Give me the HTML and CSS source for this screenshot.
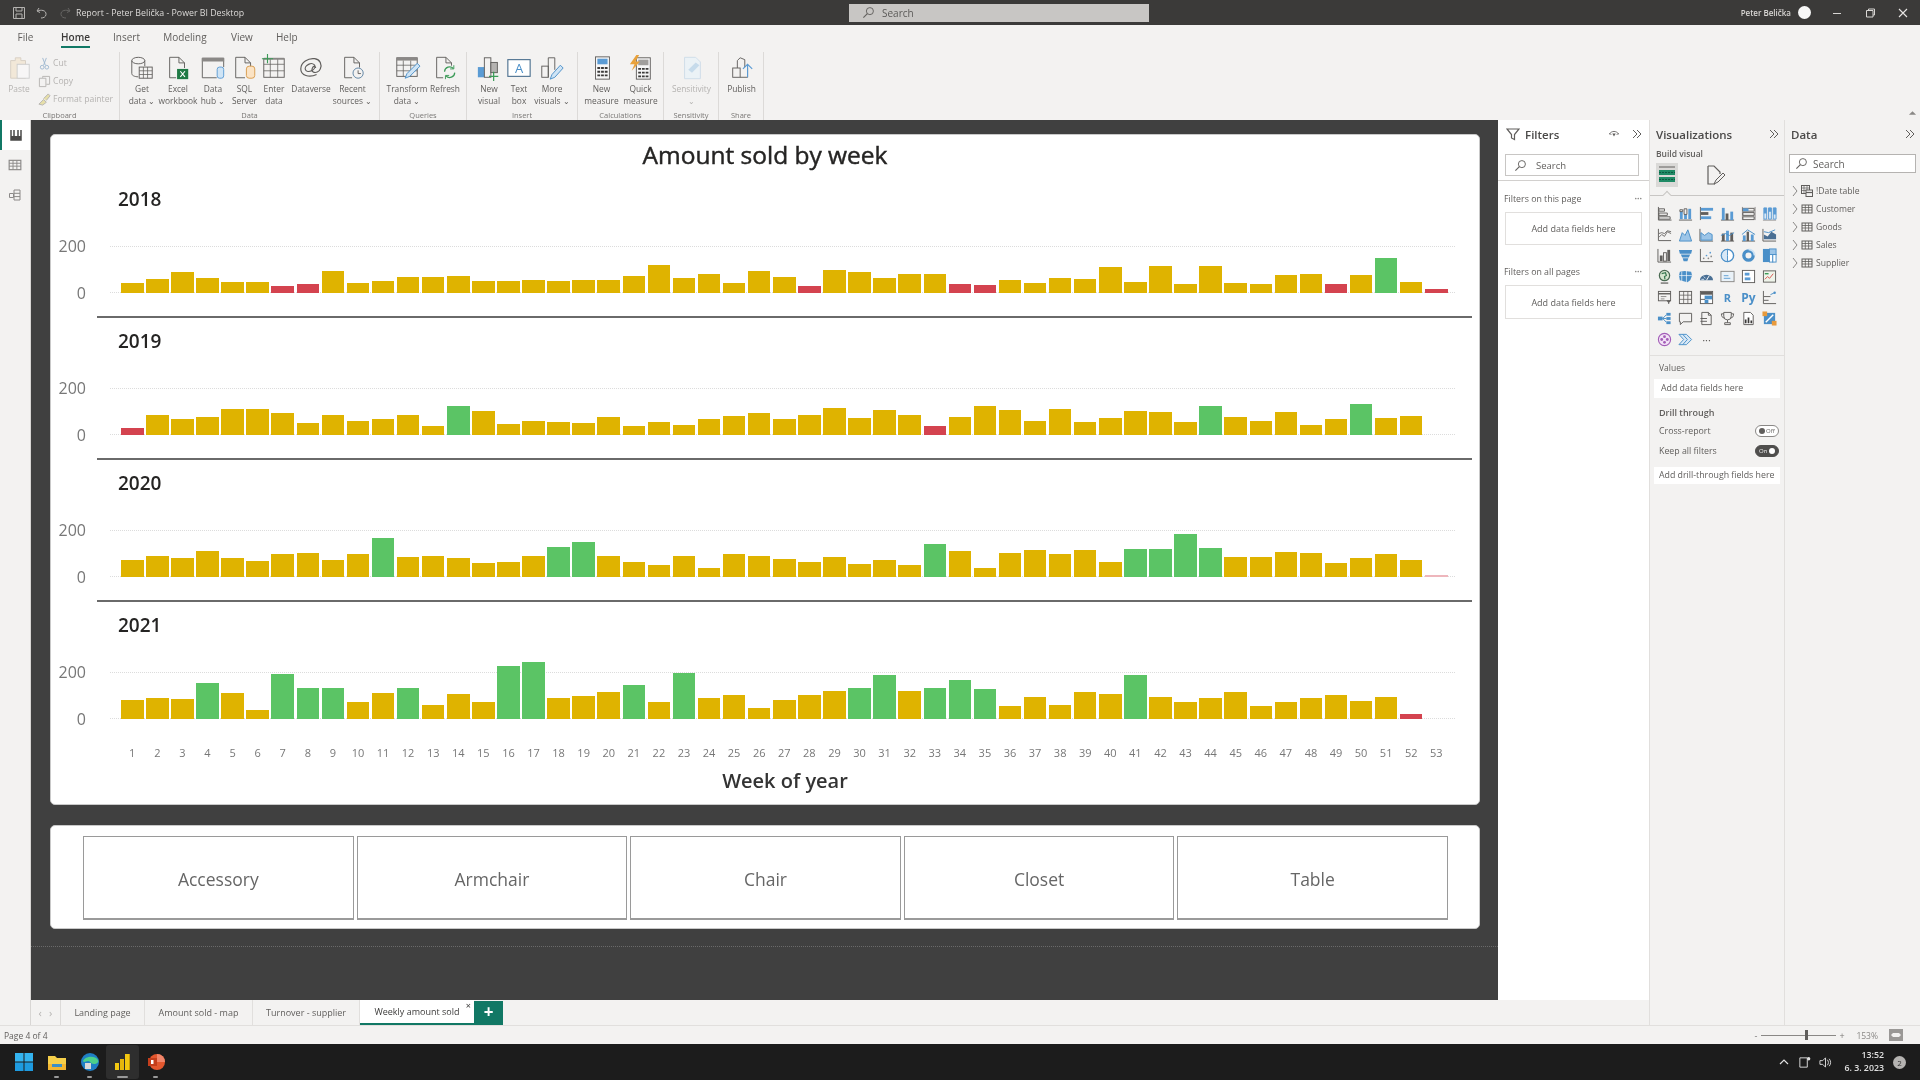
FILE: index.html
```html
<!DOCTYPE html>
<html lang="en">
<head>
<meta charset="utf-8">
<title>Report - Peter Belička - Power BI Desktop</title>
<link rel="stylesheet" href="styles.css">
</head>
<body>
<svg class="defs" width="0" height="0">
  <symbol id="tbl" viewBox="0 0 12 12"><rect x="1" y="2" width="10" height="8" fill="none" stroke="#605e5c"/><path d="M1 4.5h10M1 7h10M4.3 2v8M7.6 2v8" stroke="#605e5c" stroke-width=".8"/></symbol>
  <symbol id="dbl" viewBox="0 0 12 12"><path d="M3 2l4 4-4 4M7 2l4 4-4 4" fill="none" stroke="#605e5c" stroke-width="1"/></symbol>
  <symbol id="chev" viewBox="0 0 8 12"><path d="M2 1l4 5-4 5" fill="none" stroke="#8a8886" stroke-width="1"/></symbol>
  <symbol id="mag" viewBox="0 0 14 14"><circle cx="8.5" cy="5.5" r="3.8" fill="none" stroke="currentColor"/><path d="M5.8 8.2L1.5 12.5" stroke="currentColor" stroke-width="1.2"/></symbol>
</svg>
<div class="app">
  <header class="titlebar">
    <div class="tb-left">
      <svg class="tb-ico" viewBox="0 0 14 14"><path d="M1.5 1.5h11v11h-11zM4 1.5v3.5h6V1.5M4 12.5V8h6v4.5" fill="none" stroke="#b5b3b1"/></svg>
      <svg class="tb-ico" viewBox="0 0 14 14"><path d="M4 2L2 5l3 1.5M2.5 5c3-1.5 9-1 8.5 3.5-.3 2.5-2.500 3.500-5 3.500" fill="none" stroke="#b5b3b1"/></svg>
      <svg class="tb-ico dim" viewBox="0 0 14 14"><path d="M10 2l2 3-3 1.5M11.5 5c-3-1.5-9-1-8.5 3.5.3 2.500 2.500 3.500 5 3.500" fill="none" stroke="#b5b3b1"/></svg>
      <span class="tb-title">Report - Peter Belička - Power BI Desktop</span>
    </div>
    <div class="tb-search"><svg class="mag-ico" viewBox="0 0 14 14"><use href="#mag"/></svg><span>Search</span></div>
    <div class="tb-right">
      <span class="tb-user">Peter Belička</span><i class="avatar"></i>
      <svg class="win-ctl" viewBox="0 0 12 12"><path d="M2 6.5h8" stroke="#d8d6d4"/></svg>
      <svg class="win-ctl" viewBox="0 0 12 12"><path d="M2.5 3.5h6.5v6.5h-6.5zM4.5 3.5V2h6v6H9" fill="none" stroke="#d8d6d4"/></svg>
      <svg class="win-ctl" viewBox="0 0 12 12"><path d="M2 2l8 8M10 2l-8 8" stroke="#e8e6e4" stroke-width="1.1"/></svg>
    </div>
  </header>

  <section class="ribbon">
    <nav class="rtabs">
      <span class="rtab t-file">File</span>
      <span class="rtab t-home on">Home</span>
      <span class="rtab t-insert">Insert</span>
      <span class="rtab t-model">Modeling</span>
      <span class="rtab t-view">View</span>
      <span class="rtab t-help">Help</span>
    </nav>
    <div class="groups">
      <div class="group g-clip">
        <div class="gbody">
          <div class="rbtn w38 off">
            <svg class="ric" viewBox="0 0 28 28"><path d="M5 6h5V3h6v3h5v19H5z" fill="#f2e6d3" stroke="#cfc6b8"/><rect x="12" y="10" width="13" height="15" fill="#f8f8f8" stroke="#c4c4c4"/></svg>
            <span>Paste</span>
          </div>
          <div class="smalls">
            <div class="small off"><svg viewBox="0 0 14 14"><path d="M5 1l3 8M9 1L6 9" stroke="#9fb8cf" fill="none"/><circle cx="4.5" cy="11" r="2" fill="none" stroke="#9fb8cf"/><circle cx="9.5" cy="11" r="2" fill="none" stroke="#9fb8cf"/></svg><span>Cut</span></div>
            <div class="small off"><svg viewBox="0 0 14 14"><path d="M1.500 3.500h7v9h-7zM5 3V1.500h7.500V10H9" fill="none" stroke="#b5b3b1"/></svg><span>Copy</span></div>
            <div class="small off"><svg viewBox="0 0 14 14"><path d="M1 12l5-5 3 3-4 3zM6 6l5-5 2 2-4 5" fill="#e6dfa9" stroke="#b5b3b1"/></svg><span>Format painter</span></div>
          </div>
        </div>
        <div class="glabel">Clipboard</div>
      </div>

      <div class="group g-data">
        <div class="gbody">
          <div class="rbtn w36"><svg class="ric" viewBox="0 0 28 28"><ellipse cx="10" cy="6" rx="7" ry="3.5" fill="none" stroke="#605e5c"/><path d="M3 6v14c0 2 3 3.5 7 3.5M17 6v6" fill="none" stroke="#605e5c"/><rect x="11" y="13" width="14" height="12" fill="#f3f2f1" stroke="#605e5c"/><path d="M11 17h14M11 21h14M15.500 13v12M20 13v12" stroke="#605e5c" stroke-width=".8"/></svg><span>Get<br>data ⌄</span></div>
          <div class="rbtn w36"><svg class="ric" viewBox="0 0 28 28"><path d="M12 24.500H5v-22h10l6 6V14M15 2.500v6h6" fill="none" stroke="#605e5c"/><rect x="13" y="15" width="12" height="11" fill="#1f7a45"/><path d="M16.500 17.500l5 6M21.500 17.500l-5 6" stroke="#fff" stroke-width="1.2"/></svg><span>Excel<br>workbook</span></div>
          <div class="rbtn w34"><svg class="ric" viewBox="0 0 28 28"><path d="M18 24.500H2.500v-21h23V13" fill="none" stroke="#605e5c"/><rect x="2" y="3" width="24" height="4" fill="#8a8886"/><rect x="18.500" y="13" width="7" height="12" rx="2.500" fill="#cfe4f5" stroke="#5a9bd4"/></svg><span>Data<br>hub ⌄</span></div>
          <div class="rbtn w29"><svg class="ric" viewBox="0 0 28 28"><path d="M14 24.500H4v-22h10l6 6v4M14 2.500v6h6" fill="none" stroke="#605e5c"/><rect x="15.500" y="12" width="9" height="13" rx="3" fill="#fbe3c4" stroke="#d89a4a"/></svg><span>SQL<br>Server</span></div>
          <div class="rbtn w30"><svg class="ric" viewBox="0 0 28 28"><rect x="3" y="4" width="22" height="20" fill="none" stroke="#605e5c"/><path d="M3 10h22M3 17h22M10 4v20M18 4v20" stroke="#605e5c" stroke-width=".8"/><rect x="3" y="3" width="22" height="2" fill="#8a8886"/><path d="M1 4h12M7 -1v10" stroke="#3b9b57" stroke-width="1.2"/></svg><span>Enter<br>data</span></div>
          <div class="rbtn w44"><svg class="ric" viewBox="0 0 28 28"><path d="M20 21C12 25 3 22 3 15 3 8 11 3 18 4c6 1 8 6 6 11-1 3-5 5-8 3-2-1-1-3 0-5 1-1 3-1 3 1" fill="none" stroke="#605e5c" stroke-width="1.3"/><ellipse cx="13" cy="13.500" rx="5.500" ry="3.800" transform="rotate(-25 13 13.500)" fill="none" stroke="#605e5c" stroke-width="1.3"/></svg><span>Dataverse</span></div>
          <div class="rbtn w39"><svg class="ric" viewBox="0 0 28 28"><path d="M13 24.500H5v-22h10l6 6v5M15 2.500v6h6" fill="none" stroke="#605e5c"/><circle cx="19.500" cy="19.500" r="5.500" fill="#f3f2f1" stroke="#5a7fa0"/><path d="M19.500 16.500V20h3" fill="none" stroke="#605e5c"/></svg><span>Recent<br>sources ⌄</span></div>
        </div>
        <div class="glabel">Data</div>
      </div>

      <div class="group g-query">
        <div class="gbody">
          <div class="rbtn w48"><svg class="ric" viewBox="0 0 28 28"><rect x="3" y="3" width="22" height="20" fill="none" stroke="#605e5c"/><rect x="3" y="3" width="22" height="3" fill="#8a8886"/><path d="M3 11h22M3 17h22M10 6v17M18 6v17" stroke="#605e5c" stroke-width=".8"/><path d="M12 25l2-5 11-11 3 3-11 11z" fill="#cfe4f5" stroke="#4a8fc8"/></svg><span>Transform<br>data ⌄</span></div>
          <div class="rbtn w28"><svg class="ric" viewBox="0 0 28 28"><path d="M12 24.500H5v-22h10l6 6v3M15 2.500v6h6" fill="none" stroke="#605e5c"/><path d="M13.500 18a5.500 5.500 0 0 1 9.500-3.500M24.500 19a5.500 5.500 0 0 1-9.500 3.500" fill="none" stroke="#3b9b57" stroke-width="1.3"/><path d="M23.500 11v4h-4M14.500 26v-4h4" fill="none" stroke="#3b9b57"/></svg><span>Refresh</span></div>
        </div>
        <div class="glabel">Queries</div>
      </div>

      <div class="group g-insert">
        <div class="gbody">
          <div class="rbtn w30"><svg class="ric" viewBox="0 0 28 28"><rect x="2" y="13" width="7" height="11" fill="#5a9bd4"/><rect x="9" y="3" width="7" height="21" fill="none" stroke="#605e5c"/><rect x="16" y="8" width="7" height="11" fill="#b5b3b1" stroke="#605e5c"/><path d="M19 18v10M14 23h10" stroke="#3b9b57" stroke-width="1.3"/></svg><span>New<br>visual</span></div>
          <div class="rbtn w30"><svg class="ric" viewBox="0 0 28 28"><rect x="2" y="5" width="24" height="18" fill="#fff" stroke="#4b6f8e" stroke-width="1.2"/><text x="14" y="19" text-anchor="middle" class="svg-a">A</text></svg><span>Text<br>box</span></div>
          <div class="rbtn w36"><svg class="ric" viewBox="0 0 28 28"><rect x="3" y="12" width="7" height="12" fill="none" stroke="#605e5c"/><path d="M10 24V3h7v13" fill="none" stroke="#605e5c"/><path d="M12 26l2-5 9-10 3 3-9 10z" fill="#cfe4f5" stroke="#4a8fc8"/></svg><span>More<br>visuals ⌄</span></div>
        </div>
        <div class="glabel">Insert</div>
      </div>

      <div class="group g-calc">
        <div class="gbody">
          <div class="rbtn w41"><svg class="ric" viewBox="0 0 28 28"><rect x="7" y="2" width="15" height="24" fill="#f7f7f7" stroke="#605e5c"/><rect x="9" y="4" width="11" height="6" fill="#5a9bd4"/><path d="M9 14h3M13 14h3M17 14h3M9 18h3M13 18h3M17 18h3M9 22h3M13 22h3M17 22h3" stroke="#3b3a39" stroke-width="2"/></svg><span>New<br>measure</span></div>
          <div class="rbtn w37"><svg class="ric" viewBox="0 0 28 28"><rect x="9" y="3" width="15" height="23" fill="#f7f7f7" stroke="#605e5c"/><rect x="11" y="5" width="11" height="6" fill="#a19f9d"/><path d="M11 15h3M15 15h3M19 15h3M11 19h3M15 19h3M19 19h3M11 23h3M15 23h3M19 23h3" stroke="#3b3a39" stroke-width="2"/><path d="M9 0L2 10h5l-3 7 9-10H8l4-7z" fill="#e9a23b"/></svg><span>Quick<br>measure</span></div>
        </div>
        <div class="glabel">Calculations</div>
      </div>

      <div class="group g-sens">
        <div class="gbody">
          <div class="rbtn w55 off"><svg class="ric" viewBox="0 0 28 28"><path d="M6 2.500h12l5 5v18H6z" fill="#eaf2f8" stroke="#c5d7e6"/><path d="M10 16l8-8 4 3-8 8z" fill="#bcd6ea"/></svg><span>Sensitivity<br>⌄</span></div>
        </div>
        <div class="glabel">Sensitivity</div>
      </div>

      <div class="group g-share">
        <div class="gbody">
          <div class="rbtn w45"><svg class="ric" viewBox="0 0 28 28"><rect x="4" y="14" width="8" height="10" fill="none" stroke="#605e5c"/><path d="M9 14V6l3-3 5 2v8M12 24h8V14" fill="none" stroke="#605e5c"/><path d="M20 24V10M15 15l5-5 5 5" fill="none" stroke="#5a9bd4" stroke-width="1.2"/></svg><span>Publish</span></div>
        </div>
        <div class="glabel">Share</div>
      </div>

      <svg class="collapse" viewBox="0 0 10 6"><path d="M1 5l4-4 4 4z" fill="#8a8886"/></svg>
    </div>
  </section>

  <main class="main">
    <aside class="leftnav">
      <div class="nav-btn on"><svg viewBox="0 0 14 14"><path d="M2 2v10h10V2M5 2v6M9 2v6" fill="none" stroke="#4a4948" stroke-width="1.5"/><rect x="2" y="8" width="10" height="4" fill="#4a4948"/></svg></div>
      <div class="nav-btn soft"><svg viewBox="0 0 14 14"><use href="#tbl"/></svg></div>
      <div class="nav-btn soft"><svg viewBox="0 0 14 14"><path d="M6 2h6v10H6zM6 5.300h6M6 8.600h6M1.500 5.500h4v4h-4z" fill="none" stroke="#605e5c"/></svg></div>
    </aside>

    <div class="center">
      <div class="canvas">
        <section class="card chart">
          <h1 class="chart-title">Amount sold by week</h1>
          <div class="small-mult">
            <div class="srow">
              <div class="year">2018</div>
              <div class="plotrow">
                <div class="yaxis"><span>200</span><span>0</span></div>
                <div class="plot">
<i class="y" style="height:10.3px"></i><i class="y" style="height:13.7px"></i><i class="y" style="height:21px"></i><i class="y" style="height:14.7px"></i><i class="y" style="height:10.7px"></i><i class="y" style="height:11px"></i><i class="r" style="height:6.7px"></i><i class="r" style="height:8.7px"></i><i class="y" style="height:22.3px"></i><i class="y" style="height:10.3px"></i><i class="y" style="height:12px"></i><i class="y" style="height:16px"></i><i class="y" style="height:15.7px"></i><i class="y" style="height:16.7px"></i><i class="y" style="height:12px"></i><i class="y" style="height:12px"></i><i class="y" style="height:13px"></i><i class="y" style="height:11.7px"></i><i class="y" style="height:13.3px"></i><i class="y" style="height:13.3px"></i><i class="y" style="height:17.3px"></i><i class="y" style="height:28.3px"></i><i class="y" style="height:14.7px"></i><i class="y" style="height:19px"></i><i class="y" style="height:10.3px"></i><i class="y" style="height:21.7px"></i><i class="y" style="height:16.3px"></i><i class="r" style="height:7.3px"></i><i class="y" style="height:23.3px"></i><i class="y" style="height:21px"></i><i class="y" style="height:15.3px"></i><i class="y" style="height:19.3px"></i><i class="y" style="height:19.3px"></i><i class="r" style="height:9px"></i><i class="r" style="height:7.7px"></i><i class="y" style="height:13.3px"></i><i class="y" style="height:10.3px"></i><i class="y" style="height:14.7px"></i><i class="y" style="height:13.7px"></i><i class="y" style="height:25.7px"></i><i class="y" style="height:10.7px"></i><i class="y" style="height:27px"></i><i class="y" style="height:9px"></i><i class="y" style="height:27px"></i><i class="y" style="height:10px"></i><i class="y" style="height:9px"></i><i class="y" style="height:17.7px"></i><i class="y" style="height:19.3px"></i><i class="r" style="height:9px"></i><i class="y" style="height:18px"></i><i class="g" style="height:35.3px"></i><i class="y" style="height:11px"></i><i class="r" style="height:4.3px"></i>
                </div>
              </div>
            </div>
            <div class="srow">
              <div class="year">2019</div>
              <div class="plotrow">
                <div class="yaxis"><span>200</span><span>0</span></div>
                <div class="plot">
<i class="r" style="height:7px"></i><i class="y" style="height:20px"></i><i class="y" style="height:16.3px"></i><i class="y" style="height:18px"></i><i class="y" style="height:26.3px"></i><i class="y" style="height:26px"></i><i class="y" style="height:22px"></i><i class="y" style="height:11.7px"></i><i class="y" style="height:20.3px"></i><i class="y" style="height:14.3px"></i><i class="y" style="height:15.7px"></i><i class="y" style="height:20.3px"></i><i class="y" style="height:9px"></i><i class="g" style="height:29.3px"></i><i class="y" style="height:23.7px"></i><i class="y" style="height:11.3px"></i><i class="y" style="height:14.3px"></i><i class="y" style="height:13px"></i><i class="y" style="height:12.3px"></i><i class="y" style="height:17.7px"></i><i class="y" style="height:8.7px"></i><i class="y" style="height:13px"></i><i class="y" style="height:10px"></i><i class="y" style="height:16px"></i><i class="y" style="height:19px"></i><i class="y" style="height:22px"></i><i class="y" style="height:16px"></i><i class="y" style="height:20px"></i><i class="y" style="height:26.7px"></i><i class="y" style="height:16.7px"></i><i class="y" style="height:25.3px"></i><i class="y" style="height:19.7px"></i><i class="r" style="height:8.7px"></i><i class="y" style="height:17.7px"></i><i class="y" style="height:28.7px"></i><i class="y" style="height:25.3px"></i><i class="y" style="height:14.3px"></i><i class="y" style="height:25.7px"></i><i class="y" style="height:13.3px"></i><i class="y" style="height:17px"></i><i class="y" style="height:23.7px"></i><i class="y" style="height:23px"></i><i class="y" style="height:13.3px"></i><i class="g" style="height:29.3px"></i><i class="y" style="height:18px"></i><i class="y" style="height:14px"></i><i class="y" style="height:23.3px"></i><i class="y" style="height:10px"></i><i class="y" style="height:16.3px"></i><i class="g" style="height:31.3px"></i><i class="y" style="height:16.7px"></i><i class="y" style="height:19px"></i>
                </div>
              </div>
            </div>
            <div class="srow">
              <div class="year">2020</div>
              <div class="plotrow">
                <div class="yaxis"><span>200</span><span>0</span></div>
                <div class="plot">
<i class="y" style="height:16.7px"></i><i class="y" style="height:21px"></i><i class="y" style="height:19.3px"></i><i class="y" style="height:26px"></i><i class="y" style="height:19px"></i><i class="y" style="height:15.7px"></i><i class="y" style="height:23px"></i><i class="y" style="height:23.7px"></i><i class="y" style="height:17px"></i><i class="y" style="height:22.7px"></i><i class="g" style="height:39.3px"></i><i class="y" style="height:20px"></i><i class="y" style="height:21px"></i><i class="y" style="height:18.7px"></i><i class="y" style="height:14px"></i><i class="y" style="height:15px"></i><i class="y" style="height:20.7px"></i><i class="g" style="height:29.7px"></i><i class="g" style="height:35px"></i><i class="y" style="height:21px"></i><i class="y" style="height:15px"></i><i class="y" style="height:12.3px"></i><i class="y" style="height:21px"></i><i class="y" style="height:9.3px"></i><i class="y" style="height:23px"></i><i class="y" style="height:20.7px"></i><i class="y" style="height:18.3px"></i><i class="y" style="height:15.3px"></i><i class="y" style="height:19.7px"></i><i class="y" style="height:13px"></i><i class="y" style="height:16.7px"></i><i class="y" style="height:12.3px"></i><i class="g" style="height:33px"></i><i class="y" style="height:26px"></i><i class="y" style="height:9px"></i><i class="y" style="height:24.3px"></i><i class="y" style="height:27.3px"></i><i class="y" style="height:22.7px"></i><i class="y" style="height:27px"></i><i class="y" style="height:15.3px"></i><i class="g" style="height:28.3px"></i><i class="g" style="height:28.3px"></i><i class="g" style="height:43px"></i><i class="g" style="height:28.7px"></i><i class="y" style="height:19.7px"></i><i class="y" style="height:20px"></i><i class="y" style="height:24.7px"></i><i class="y" style="height:24px"></i><i class="y" style="height:14px"></i><i class="y" style="height:19px"></i><i class="y" style="height:23px"></i><i class="y" style="height:17.3px"></i><i class="p" style="height:2px"></i>
                </div>
              </div>
            </div>
            <div class="srow last">
              <div class="year">2021</div>
              <div class="plotrow">
                <div class="yaxis"><span>200</span><span>0</span></div>
                <div class="plot">
<i class="y" style="height:19px"></i><i class="y" style="height:21px"></i><i class="y" style="height:19.7px"></i><i class="g" style="height:36px"></i><i class="y" style="height:26.3px"></i><i class="y" style="height:9px"></i><i class="g" style="height:45.3px"></i><i class="g" style="height:30.7px"></i><i class="g" style="height:30.7px"></i><i class="y" style="height:17px"></i><i class="y" style="height:25.7px"></i><i class="g" style="height:31.3px"></i><i class="y" style="height:13.7px"></i><i class="y" style="height:25px"></i><i class="y" style="height:17px"></i><i class="g" style="height:53.3px"></i><i class="g" style="height:56.7px"></i><i class="y" style="height:21.3px"></i><i class="y" style="height:22.7px"></i><i class="y" style="height:27px"></i><i class="g" style="height:33.7px"></i><i class="y" style="height:16.7px"></i><i class="g" style="height:46px"></i><i class="y" style="height:21.3px"></i><i class="y" style="height:24.3px"></i><i class="y" style="height:11.3px"></i><i class="y" style="height:19.3px"></i><i class="y" style="height:24.3px"></i><i class="y" style="height:28px"></i><i class="g" style="height:31.3px"></i><i class="g" style="height:43.7px"></i><i class="y" style="height:28px"></i><i class="g" style="height:31.3px"></i><i class="g" style="height:39.3px"></i><i class="g" style="height:30.3px"></i><i class="y" style="height:13px"></i><i class="y" style="height:22.3px"></i><i class="y" style="height:14px"></i><i class="y" style="height:27.3px"></i><i class="y" style="height:24.7px"></i><i class="g" style="height:43.7px"></i><i class="y" style="height:22.3px"></i><i class="y" style="height:16.7px"></i><i class="y" style="height:21px"></i><i class="y" style="height:26.7px"></i><i class="y" style="height:13.3px"></i><i class="y" style="height:16.7px"></i><i class="y" style="height:20.7px"></i><i class="y" style="height:24.3px"></i><i class="y" style="height:17.7px"></i><i class="y" style="height:22.3px"></i><i class="r" style="height:5px"></i>
                </div>
              </div>
            </div>
          </div>
          <div class="xaxis"><span>1</span><span>2</span><span>3</span><span>4</span><span>5</span><span>6</span><span>7</span><span>8</span><span>9</span><span>10</span><span>11</span><span>12</span><span>13</span><span>14</span><span>15</span><span>16</span><span>17</span><span>18</span><span>19</span><span>20</span><span>21</span><span>22</span><span>23</span><span>24</span><span>25</span><span>26</span><span>27</span><span>28</span><span>29</span><span>30</span><span>31</span><span>32</span><span>33</span><span>34</span><span>35</span><span>36</span><span>37</span><span>38</span><span>39</span><span>40</span><span>41</span><span>42</span><span>43</span><span>44</span><span>45</span><span>46</span><span>47</span><span>48</span><span>49</span><span>50</span><span>51</span><span>52</span><span>53</span></div>
          <div class="xtitle">Week of year</div>
        </section>
        <section class="card slicer">
          <div class="slice">Accessory</div>
          <div class="slice">Armchair</div>
          <div class="slice">Chair</div>
          <div class="slice">Closet</div>
          <div class="slice">Table</div>
        </section>
        <div class="page-edge"></div>
      </div>
      <div class="pagetabs">
        <div class="tab-nav"><span>‹</span><span>›</span></div>
        <div class="ptab p-land">Landing page</div>
        <div class="ptab p-amt">Amount sold - map</div>
        <div class="ptab p-turn">Turnover - supplier</div>
        <div class="ptab p-week on">Weekly amount sold<b class="x">×</b></div>
        <div class="padd">+</div>
      </div>
    </div>

    <aside class="pane filters">
      <div class="phead">
        <svg class="funnel" viewBox="0 0 14 14"><path d="M1 2h12L8.5 7.5v5l-3-1.500V7.500z" fill="none" stroke="#605e5c" stroke-width="1.2"/></svg>
        <span class="ptitle">Filters</span>
        <svg class="eye" viewBox="0 0 14 14"><path d="M1.500 7c3-4 8-4 11 0-1.500 0-2 .5-2.500.5M1.500 7c1.500 0 2 .5 2.500.5" fill="none" stroke="#605e5c"/><path d="M5 6.500h4L7 10z" fill="#605e5c"/></svg>
        <svg class="dbl" viewBox="0 0 12 12"><use href="#dbl"/></svg>
      </div>
      <div class="fsearch"><svg class="mag-ico" viewBox="0 0 14 14"><use href="#mag"/></svg><span>Search</span></div>
      <div class="fsep"></div>
      <div class="flabel"><span>Filters on this page</span><span class="dots">···</span></div>
      <div class="fwell">Add data fields here</div>
      <div class="flabel second"><span>Filters on all pages</span><span class="dots">···</span></div>
      <div class="fwell tall">Add data fields here</div>
    </aside>

    <aside class="pane viz">
      <div class="phead"><span class="ptitle">Visualizations</span><svg class="dbl" viewBox="0 0 12 12"><use href="#dbl"/></svg></div>
      <div class="build">Build visual</div>
      <div class="buildrow">
        <div class="bsel"><svg viewBox="0 0 20 20"><path d="M2 2h16" stroke="#605e5c"/><rect x="2" y="5" width="16" height="5" fill="#1f8a65"/><rect x="2" y="12" width="16" height="5" fill="#1f8a65"/><path d="M2 7.500h16M2 14.500h16" stroke="#0e5a42" stroke-dasharray="2 1"/></svg></div>
        <svg class="bfmt" viewBox="0 0 22 22"><path d="M4 2h6l6 6v2M4 2v18h7" fill="none" stroke="#605e5c" stroke-width="1.2"/><path d="M10 20l2-4 7-7 2 2-7 7z" fill="none" stroke="#605e5c"/></svg>
      </div>
      <div class="vsep"><i></i></div>
      <div class="vgrid">
        <svg viewBox="0 0 16 16"><path d="M1.500 1v14h14" fill="none" stroke="#605e5c"/><path d="M2 3h6v2.500H2zM2 7.500h9V10H2zM2 11.500h12V14H2z" fill="none" stroke="#605e5c"/></svg>
        <svg viewBox="0 0 16 16"><path d="M1 15h14" stroke="#605e5c"/><rect x="2" y="6" width="3" height="8" fill="#5a9bd4"/><rect x="6.500" y="9" width="3" height="5" fill="#5a9bd4"/><rect x="11" y="3" width="3" height="11" fill="#5a9bd4"/><path d="M2 4h3v2H2zM6.500 3h3v6h-3z" fill="none" stroke="#605e5c"/></svg>
        <svg viewBox="0 0 16 16"><path d="M1.500 1v14" stroke="#605e5c"/><rect x="2" y="2" width="13" height="3" fill="#5a9bd4"/><rect x="2" y="6.500" width="8" height="3" fill="#605e5c"/><rect x="2" y="11" width="11" height="3" fill="#5a9bd4"/></svg>
        <svg viewBox="0 0 16 16"><path d="M1 15h14" stroke="#605e5c"/><rect x="2" y="2" width="3" height="13" fill="#5a9bd4"/><rect x="6" y="8" width="3" height="7" fill="#605e5c"/><rect x="11" y="6" width="3" height="9" fill="#5a9bd4"/></svg>
        <svg viewBox="0 0 16 16"><path d="M1.500 1v14M15 1v14" stroke="#8a8886"/><path d="M2 2.500h12v3H2zM2 7h12v3H2zM2 11.500h12v3H2z" fill="none" stroke="#605e5c"/><path d="M2 2.500h6v3H2z" fill="#5a9bd4"/></svg>
        <svg viewBox="0 0 16 16"><path d="M1 15h14" stroke="#8a8886"/><path d="M2 2h3v12H2zM7 2h3v12H7zM12 2h3v12h-3z" fill="#d8e8f6" stroke="#5a9bd4"/><path d="M2 2h3v6H2zM7 2h3v4H7zM12 2h3v7h-3z" fill="#5a9bd4"/></svg>

        <svg viewBox="0 0 16 16"><path d="M1.500 2v12.500H15" fill="none" stroke="#605e5c"/><path d="M2 11l3-3 3 2 3-5 4 2M2 7l3-1 3 1 3-3 4 1" fill="none" stroke="#605e5c" stroke-width=".9"/></svg>
        <svg viewBox="0 0 16 16"><path d="M1.500 15l3-9 3 3 3-6 4 12z" fill="#9cc5e8" stroke="#4a8fc8"/></svg>
        <svg viewBox="0 0 16 16"><path d="M1 2v13h14" fill="none" stroke="#605e5c"/><path d="M2 6l4 3 4-3 4 2v6H2z" fill="#9cc5e8" stroke="#4a8fc8"/></svg>
        <svg viewBox="0 0 16 16"><path d="M1 15h14" stroke="#605e5c"/><rect x="2" y="7" width="3" height="8" fill="#605e5c"/><rect x="6.500" y="4" width="3" height="11" fill="#5a9bd4"/><rect x="11" y="6" width="3" height="9" fill="#605e5c"/><path d="M1 9l5-2 4 2 5-3" fill="none" stroke="#4a8fc8"/></svg>
        <svg viewBox="0 0 16 16"><path d="M1 15h14" stroke="#605e5c"/><rect x="2" y="9" width="3" height="6" fill="#5a9bd4"/><rect x="6" y="5" width="2.500" height="10" fill="#605e5c"/><rect x="10.500" y="8" width="3" height="7" fill="#5a9bd4"/><path d="M1 8l6-5 8 5" fill="none" stroke="#4a8fc8"/></svg>
        <svg viewBox="0 0 16 16"><path d="M1 2v13h14" fill="none" stroke="#605e5c"/><path d="M2 8l4 2 4-5 5 3v5H2z" fill="#4a6f94"/><path d="M2 5l5 1 7-3" fill="none" stroke="#4a8fc8"/></svg>

        <svg viewBox="0 0 16 16"><path d="M1 15h14M1 1v14" stroke="#605e5c"/><rect x="3" y="8" width="3" height="6" fill="#605e5c"/><rect x="7" y="5" width="3" height="9" fill="none" stroke="#605e5c"/><rect x="11" y="2" width="3" height="12" fill="#605e5c"/></svg>
        <svg viewBox="0 0 16 16"><path d="M1 2h14l-1 4H2zM3 7h10l-1.500 3h-7zM5 11h6l-1 3H6z" fill="#4a8fc8"/></svg>
        <svg viewBox="0 0 16 16"><path d="M1.500 1v13.500H15" fill="none" stroke="#605e5c"/><circle cx="5" cy="11" r=".9" fill="#8a8886"/><circle cx="8" cy="8" r=".9" fill="#5a9bd4"/><circle cx="10" cy="11" r=".9" fill="#8a8886"/><circle cx="12" cy="5" r=".9" fill="#5a9bd4"/><circle cx="13" cy="9" r=".9" fill="#8a8886"/></svg>
        <svg viewBox="0 0 16 16"><circle cx="8" cy="8" r="6.500" fill="#fff" stroke="#4a8fc8" stroke-width="1.5"/><path d="M8 8V1.500A6.500 6.500 0 0 0 8 14.500z" fill="#d8e8f6" stroke="#4a8fc8"/></svg>
        <svg viewBox="0 0 16 16"><circle cx="8" cy="8" r="5" fill="none" stroke="#4a8fc8" stroke-width="3.500"/><path d="M8 1.500A6.500 6.500 0 0 1 14.500 8" fill="none" stroke="#cfe4f5" stroke-width="2"/></svg>
        <svg viewBox="0 0 16 16"><rect x="1" y="1" width="7" height="14" fill="#4a8fc8"/><rect x="8" y="1" width="7" height="6" fill="#9cc5e8" stroke="#4a8fc8"/><rect x="8" y="7" width="3.500" height="8" fill="#fff" stroke="#4a8fc8"/><rect x="11.500" y="7" width="3.500" height="8" fill="#fff" stroke="#4a8fc8"/></svg>

        <svg viewBox="0 0 16 16"><circle cx="8" cy="7" r="5.500" fill="#d6e6d0" stroke="#4a6a52" stroke-width="1.3"/><path d="M5 5l4-1 1 3-2 1 .5 3" fill="none" stroke="#3b7a52" stroke-width="1.3"/><path d="M4 15h8" stroke="#605e5c" stroke-width="1.3"/></svg>
        <svg viewBox="0 0 16 16"><path d="M2 3l5-1 7 1 1 4-2 5-3 2-4-1-4-1-1-5z" fill="#4a8fc8"/><path d="M4 3v10M9 2v12M1 7h14" stroke="#fff" stroke-width=".7"/></svg>
        <svg viewBox="0 0 16 16"><path d="M1 12a7 6 0 0 1 14 0z" fill="#4a6f94"/><path d="M8 12l3-5" stroke="#fff"/><path d="M2.500 11h3M5 8l2 2" stroke="#cfe4f5"/></svg>
        <svg viewBox="0 0 16 16"><rect x="1" y="2.500" width="14" height="11" fill="#eaf2f8" stroke="#8a8886"/><path d="M4 7h5M4 10h7" stroke="#7fb2dc" stroke-width="1.4"/></svg>
        <svg viewBox="0 0 16 16"><rect x="1.500" y="1.500" width="13" height="13" fill="#fff" stroke="#605e5c"/><rect x="4" y="4" width="5" height="3" fill="#5a9bd4"/><rect x="4" y="9" width="6" height="3" fill="#5a9bd4"/></svg>
        <svg viewBox="0 0 16 16"><rect x="1.500" y="2" width="13" height="12" fill="#eef4ea" stroke="#605e5c"/><path d="M3 11l3-3 2 2 4-5" fill="none" stroke="#d9534f"/><path d="M3 5h4" stroke="#3b9b57" stroke-width="1.5"/></svg>

        <svg viewBox="0 0 16 16"><rect x="1.500" y="1.500" width="13" height="10" fill="none" stroke="#605e5c"/><path d="M1.500 4h13" stroke="#605e5c" stroke-width="1.5"/><path d="M4 7h6M4 9.500h4" stroke="#8a8886"/><path d="M10 11h5l-2 2.500V15h-1v-1.500z" fill="#605e5c"/></svg>
        <svg viewBox="0 0 16 16"><rect x="1.500" y="1.500" width="13" height="13" fill="none" stroke="#605e5c"/><path d="M1.500 5.500h13M1.500 10h13M6 1.500v13M10.500 1.500v13" stroke="#605e5c" stroke-width=".8"/></svg>
        <svg viewBox="0 0 16 16"><rect x="1.500" y="1.500" width="13" height="13" fill="#fff" stroke="#605e5c"/><rect x="2" y="2" width="12" height="3" fill="#605e5c"/><rect x="6" y="6" width="8" height="4" fill="#4a8fc8"/><rect x="6" y="10.500" width="4" height="3.500" fill="#4a8fc8"/><path d="M1.500 10h5" stroke="#605e5c"/></svg>
        <span class="vt">R</span>
        <span class="vt py">Py</span>
        <svg viewBox="0 0 16 16"><path d="M1.500 1v13.500H15" fill="none" stroke="#605e5c"/><path d="M2 7h7M2 11h5" stroke="#605e5c"/><path d="M9 5l4-2" stroke="#4a8fc8"/><circle cx="13.500" cy="3" r="1.300" fill="#4a8fc8"/></svg>

        <svg viewBox="0 0 16 16"><rect x="1" y="6" width="5" height="4" fill="#4a8fc8"/><path d="M6 8l4-4M6 8l4 4M6 8h4" stroke="#4a8fc8"/><rect x="10" y="2" width="4.500" height="3" fill="#4a8fc8"/><rect x="10" y="6.500" width="4.500" height="3" fill="#4a8fc8"/><rect x="10" y="11" width="4.500" height="3" fill="#4a8fc8"/></svg>
        <svg viewBox="0 0 16 16"><path d="M1.500 2.500h13v9h-9l-3 3v-3h-1z" fill="none" stroke="#605e5c"/></svg>
        <svg viewBox="0 0 16 16"><path d="M3 1.500h7l3 3v10H3zM10 1.500v3h3M1.500 8h7M1.500 11h7" fill="none" stroke="#605e5c"/></svg>
        <svg viewBox="0 0 16 16"><path d="M4 1.500h8v4a4 4 0 0 1-8 0zM4 3H1.500c0 3 1 4 3 4.500M12 3h2.500c0 3-1 4-3 4.500M8 9.500v3M5 14.500h6v-2H5z" fill="none" stroke="#605e5c"/></svg>
        <svg viewBox="0 0 16 16"><path d="M3 1.500h7l3 3v10H3z" fill="#fff" stroke="#605e5c"/><path d="M5 13V9M8 13V7M11 13v-3" stroke="#3b3a39" stroke-width="1.8"/></svg>
        <svg viewBox="0 0 16 16"><rect x="2" y="2" width="12" height="12" fill="#4a8fc8"/><path d="M4 12L12 4" stroke="#fff" stroke-width="1.5"/><rect x="0.500" y="0.500" width="5" height="5" fill="#e89a3c"/><rect x="10.500" y="10.500" width="5" height="5" fill="#e89a3c"/></svg>

        <svg viewBox="0 0 16 16"><circle cx="8" cy="8" r="6.500" fill="#f3e3f6" stroke="#a35cb8" stroke-width="1.2"/><circle cx="8" cy="5" r="1.500" fill="#a35cb8"/><circle cx="5" cy="8" r="1.500" fill="#a35cb8"/><circle cx="11" cy="8" r="1.500" fill="#a35cb8"/><circle cx="8" cy="11" r="1.500" fill="#a35cb8"/></svg>
        <svg viewBox="0 0 16 16"><path d="M1 2.500h8l5.500 5.500-5.500 5.500H1L6 8z" fill="#d8e8f6" stroke="#4a8fc8"/><path d="M5 2.500L10 8l-5 5.500" fill="none" stroke="#4a8fc8"/></svg>
        <span class="vt more">···</span>
      </div>
      <div class="vline"></div>
      <div class="vlabel">Values</div>
      <div class="vwell">Add data fields here</div>
      <div class="vlabel strong">Drill through</div>
      <div class="vopt"><span>Cross-report</span><span class="tog">Off<i></i></span></div>
      <div class="vopt"><span>Keep all filters</span><span class="tog ison">On<i></i></span></div>
      <div class="vwell short">Add drill-through fields here</div>
    </aside>

    <aside class="pane data">
      <div class="phead"><span class="ptitle">Data</span><svg class="dbl" viewBox="0 0 12 12"><use href="#dbl"/></svg></div>
      <div class="dsearch"><svg class="mag-ico" viewBox="0 0 14 14"><use href="#mag"/></svg><span>Search</span></div>
      <div class="tree">
        <div class="node"><svg class="ch" viewBox="0 0 8 12"><use href="#chev"/></svg><svg class="ti" viewBox="0 0 12 12"><rect x="0.500" y="0.500" width="8" height="8" fill="#f3f2f1" stroke="#605e5c"/><path d="M.5 3h8M.5 5.500h8M3 .5v8M6 .5v8" stroke="#605e5c" stroke-width=".7"/><rect x="5" y="5" width="6.500" height="6.500" fill="#f3f2f1" stroke="#605e5c"/><path d="M5 7.500h6.500" stroke="#605e5c" stroke-width="1.2"/></svg><span>!Date table</span></div>
        <div class="node"><svg class="ch" viewBox="0 0 8 12"><use href="#chev"/></svg><svg class="ti" viewBox="0 0 12 12"><use href="#tbl"/></svg><span>Customer</span></div>
        <div class="node"><svg class="ch" viewBox="0 0 8 12"><use href="#chev"/></svg><svg class="ti" viewBox="0 0 12 12"><use href="#tbl"/></svg><span>Goods</span></div>
        <div class="node"><svg class="ch" viewBox="0 0 8 12"><use href="#chev"/></svg><svg class="ti" viewBox="0 0 12 12"><use href="#tbl"/></svg><span>Sales</span></div>
        <div class="node"><svg class="ch" viewBox="0 0 8 12"><use href="#chev"/></svg><svg class="ti" viewBox="0 0 12 12"><use href="#tbl"/></svg><span>Supplier</span></div>
      </div>
    </aside>
  </main>

  <div class="status">
    <span>Page 4 of 4</span>
    <div class="zoombar">
      <span class="zb">-</span>
      <div class="slider"><i></i></div>
      <span class="zb">+</span>
      <span class="pct">153%</span>
      <svg class="fit" viewBox="0 0 14 12"><rect width="14" height="12" fill="#9a9896"/><path d="M4 4h6v4H4z" fill="#f3f2f1"/><path d="M2 6l2-2v4zM12 6l-2-2v4z" fill="#f3f2f1"/></svg>
    </div>
  </div>

  <footer class="taskbar">
    <div class="apps">
      <div class="app-ico"><svg viewBox="0 0 20 20"><rect x="1" y="1" width="8.500" height="8.500" fill="#34b4f0"/><rect x="10.500" y="1" width="8.500" height="8.500" fill="#34b4f0"/><rect x="1" y="10.500" width="8.500" height="8.500" fill="#1e9be0"/><rect x="10.500" y="10.500" width="8.500" height="8.500" fill="#1e9be0"/></svg></div>
      <div class="app-ico pin"><svg viewBox="0 0 20 20"><path d="M1 4h7l2 2h9v12H1z" fill="#f5cf4a"/><rect x="1" y="12" width="18" height="6" fill="#f2b632"/><rect x="5" y="12" width="10" height="3" fill="#3a8fc8"/></svg></div>
      <div class="app-ico pin"><svg viewBox="0 0 20 20"><circle cx="10" cy="10" r="9" fill="#1f7fc4"/><path d="M3 9c2-5 12-6 15-1 1 2-1 4-4 4-4 0-3-3-6-3-2 0-4 2-5 0z" fill="#4cd08a"/><rect x="5" y="11" width="6" height="6" fill="#d9d9d9"/></svg></div>
      <div class="app-ico pin active"><svg viewBox="0 0 20 20"><rect x="2" y="11" width="4" height="7" fill="#f2c811"/><rect x="7" y="7" width="4" height="11" fill="#e5b60c"/><path d="M12 2h5v16h-5z" fill="#f2c811"/><path d="M16 2h1v16h-1z" fill="#c79a05"/></svg></div>
      <div class="app-ico pin"><svg viewBox="0 0 20 20"><circle cx="11" cy="10" r="8" fill="#e4572e"/><path d="M11 2a8 8 0 0 1 8 8h-8z" fill="#f0856a"/><rect x="2" y="6" width="9" height="8" fill="#c43e1c"/><rect x="5" y="8" width="2.500" height="4" fill="#fff"/></svg></div>
    </div>
    <div class="tray">
      <svg class="tico up" viewBox="0 0 12 12"><path d="M2 8l4-4 4 4" fill="none" stroke="#e0e0e0" stroke-width="1.2"/></svg>
      <svg class="tico" viewBox="0 0 14 14"><path d="M2 2h8v10H2z" fill="none" stroke="#e0e0e0"/><circle cx="11.500" cy="3" r="1.800" fill="#e0e0e0"/></svg>
      <svg class="tico" viewBox="0 0 14 14"><path d="M1 5h3l3-3v10l-3-3H1z" fill="none" stroke="#e0e0e0"/><path d="M9 4c1.500 2 1.500 4 0 6M11 3c2 2.500 2 5.500 0 8" fill="none" stroke="#e0e0e0"/></svg>
      <div class="clock"><span>13:52</span><span>6. 3. 2023</span></div>
      <span class="badge">2</span>
    </div>
  </footer>
</div>
</body>
</html>
```

FILE: styles.css
```css
* { box-sizing: border-box; }
html, body { margin: 0; height: 100%; }
body { font-family: "Open Sans", "Noto Sans", "Liberation Sans", sans-serif; background: #f3f2f1; color: #3b3a39; overflow: hidden; }
.defs { position: absolute; }
.app { width: 1920px; height: 1080px; display: flex; flex-direction: column; filter: blur(0.35px); }

/* title bar */
.titlebar { height: 25px; background: #3b3a39; display: flex; align-items: center; position: relative; flex: none; }
.tb-left { display: flex; align-items: center; width: 849px; padding-left: 12px; }
.tb-ico { width: 14px; height: 14px; margin-right: 9px; flex: none; }
.tb-ico.dim { opacity: .35; }
.tb-title { color: #dcdad8; font-size: 8.8px; margin-left: -5px; white-space: nowrap; }
.tb-search { width: 300px; height: 18px; background: #c8c6c4; display: flex; align-items: center; padding-left: 13px; color: #5a5957; font-size: 10px; flex: none; }
.tb-search .mag-ico { margin-right: 7px; }
.mag-ico { width: 13px; height: 13px; margin-right: 6px; flex: none; color: #605e5c; }
.tb-right { margin-left: auto; display: flex; align-items: center; }
.tb-user { color: #d8d6d4; font-size: 8px; font-weight: 600; white-space: nowrap; }
.avatar { width: 13px; height: 13px; border-radius: 50%; background: #f7f7f7; margin: 0 20px 0 7px; }
.win-ctl { width: 12px; height: 12px; margin-right: 21px; }
.win-ctl:last-child { margin-right: 11px; }

/* ribbon */
.ribbon { height: 95px; background: #f3f2f1; flex: none; }
.rtabs { height: 27px; position: relative; display: flex; font-size: 10px; color: #605e5c; }
.rtab { padding-top: 5px; height: 23px; text-align: center; flex: none; }
.t-file { margin-left: 17px; width: 17px; }
.t-home { margin-left: 27px; width: 29px; color: #3b3a39; font-weight: 600; border-bottom: 2px solid #117865; }
.t-insert { margin-left: 23px; width: 26px; }
.t-model { margin-left: 24px; width: 44px; }
.t-view { margin-left: 24px; width: 21px; }
.t-help { margin-left: 24px; width: 21px; }
.groups { display: flex; height: 68px; position: relative; }
.group { display: flex; flex-direction: column; border-right: 1px solid #dcdad8; flex: none; }
.gbody { flex: 1; display: flex; padding-top: 3px; }
.glabel { height: 12px; line-height: 12px; text-align: center; font-size: 7.5px; color: #7a7876; position: relative; top: 1px; }
.g-clip { width: 120px; }
.g-data { width: 260px; }
.g-data .gbody { padding-left: 4px; }
.g-query { width: 87px; }
.g-query .gbody { padding-left: 3px; }
.g-insert { width: 111px; }
.g-insert .gbody { padding-left: 7px; }
.g-calc { width: 86px; }
.g-calc .gbody { padding-left: 3px; }
.g-sens { width: 55px; }
.g-share { width: 45px; }
.rbtn { display: flex; flex-direction: column; align-items: center; text-align: center; font-size: 8.4px; line-height: 12px; color: #605e5c; flex: none; white-space: nowrap; }
.rbtn.off { color: #b5b3b1; }
.rbtn.off .ric { opacity: .8; }
.ric { width: 26px; height: 26px; margin-bottom: 2px; flex: none; overflow: visible; }
.w28 { width: 28px; } .w29 { width: 29px; } .w30 { width: 30px; } .w34 { width: 34px; } .w36 { width: 36px; }
.w37 { width: 37px; } .w38 { width: 38px; } .w39 { width: 39px; } .w41 { width: 41px; } .w44 { width: 44px; }
.w45 { width: 45px; } .w48 { width: 48px; } .w55 { width: 55px; }
.svg-a { font-size: 14px; fill: #4a8fc8; font-family: "Open Sans", sans-serif; }
.smalls { display: flex; flex-direction: column; gap: 4px; padding-top: 1px; }
.small { display: flex; align-items: center; height: 14px; font-size: 8.6px; color: #b5b3b1; white-space: nowrap; }
.small svg { width: 13px; height: 13px; margin-right: 2px; }
.small span { white-space: nowrap; }
.collapse { position: absolute; right: 3px; bottom: 4px; width: 9px; height: 6px; }

/* main */
.main { flex: 1; display: flex; min-height: 0; background: #f3f2f1; }
.leftnav { width: 31px; flex: none; background: #f3f2f1; border-right: 1px solid #d8d6d4; }
.nav-btn { height: 30px; display: flex; align-items: center; justify-content: center; }
.nav-btn svg { width: 14px; height: 14px; }
.nav-btn.soft svg { opacity: .7; }
.nav-btn.on { background: #fff; border-left: 2px solid #117865; padding-right: 1px; }
.center { width: 1467px; flex: none; display: flex; flex-direction: column; }
.canvas { flex: 1; background: #404040; padding: 14px 18px 0 19px; display: flex; flex-direction: column; }

.card { background: #fff; border: 1px solid #c9c9c9; border-radius: 5px; width: 1430px; flex: none; }
.chart { height: 671px; display: flex; flex-direction: column; }
.chart-title { margin: 0; height: 41px; line-height: 40px; text-align: center; font-size: 24.5px; font-weight: 400; color: #252423; -webkit-text-stroke: .45px #252423; }
.small-mult { margin-left: 46px; width: 1375px; }
.srow { height: 142px; border-bottom: 2px solid #6a6a6a; }
.srow.last { border-bottom: 0; }
.year { height: 46px; line-height: 46px; padding-left: 21px; font-size: 19px; font-weight: 600; color: #252423; }
.plotrow { display: flex; margin-top: 24px; height: 46px; }
.yaxis { width: 27px; margin-left: -38px; margin-right: 24px; flex: none; height: 47px; display: flex; flex-direction: column; justify-content: space-between; align-items: flex-end; font-size: 16px; color: #777; }
.yaxis span { height: 0; line-height: 0; }
.plot { width: 1345px; height: 47px; flex: none; padding-left: 11px; display: flex; align-items: flex-end; gap: 2.58px; border-top: 1px dotted #dcdcdc; border-bottom: 1px dotted #dcdcdc; }
.plot i { display: block; width: 22.5px; flex: none; margin-bottom: -1px; }
.y { background: #dfb300; }
.g { background: #5bc465; }
.r { background: #d4434f; }
.p { background: #eeb6bc; }
.xaxis { display: flex; gap: 2.58px; margin-left: 70px; margin-top: -3px; height: 22px; align-items: center; font-size: 11px; color: #777; }
.xaxis span { width: 22.5px; flex: none; text-align: center; }
.xtitle { text-align: center; margin: 4px 0 0 40px; font-size: 20px; font-weight: 600; color: #333; line-height: 28px; }
.slicer { height: 104px; margin-top: 20px; display: flex; gap: 3px; padding: 10px 31px 8px 32px; }
.slice { width: 270.6px; flex: none; border: 1px solid #9a9a9a; border-bottom-width: 2px; display: flex; align-items: center; justify-content: center; font-size: 17.5px; color: #666; padding-top: 2px; }
.page-edge { margin-top: 17px; margin-left: -19px; margin-right: -18px; border-top: 1px dotted #6a6a6a; }

.pagetabs { height: 25px; flex: none; display: flex; background: #f3f2f1; font-size: 9px; color: #605e5c; }
.tab-nav { width: 30px; display: flex; justify-content: space-around; align-items: center; color: #b5b3b1; border-right: 1px solid #dcdad8; padding: 0 4px; font-size: 11px; }
.ptab { display: flex; align-items: center; justify-content: center; border-right: 1px solid #e1dfdd; position: relative; white-space: nowrap; flex: none; height: 25px; }
.p-land { width: 84px; }
.p-amt { width: 108px; }
.p-turn { width: 107px; }
.p-week { width: 114px; }
.ptab.on { background: #fff; border-right: 0; border-bottom: 2px solid #117865; color: #3b3a39; }
.x { position: absolute; right: 3px; top: 0; font-size: 9px; line-height: 12px; font-weight: 400; color: #3b3a39; }
.padd { width: 29px; height: 24px; margin-top: 1px; background: #117865; color: #fff; font-size: 17px; font-weight: 700; line-height: 22px; text-align: center; flex: none; }

/* panes */
.pane { flex: none; display: flex; flex-direction: column; font-size: 9px; color: #605e5c; }
.filters { width: 151px; background: #fff; margin-bottom: 25px; }
.viz { width: 136px; border-left: 1px solid #e1dfdd; border-right: 1px solid #e1dfdd; padding-left: 6px; }
.data { width: 135px; padding-left: 4px; }
.phead { height: 28px; display: flex; align-items: center; flex: none; }
.ptitle { font-size: 11.5px; font-weight: 600; color: #4a4948; }
.dbl { width: 12px; height: 12px; margin-left: auto; flex: none; }
.filters .phead { padding: 0 7px 0 8px; }
.funnel { width: 14px; height: 14px; margin-right: 5px; }
.eye { width: 12px; height: 12px; margin-left: auto; margin-right: 10px; }
.filters .dbl { margin-left: 0; }
.viz .dbl { margin-right: 5px; }
.data .dbl { margin-right: 5px; }
.data .ptitle { margin-left: 2px; }
.fsearch { margin: 6px 0 0 7px; width: 134px; height: 22px; border: 1px solid #c8c6c4; display: flex; align-items: center; padding-left: 8px; font-size: 9.5px; flex: none; }
.fsearch .mag-ico { margin-right: 9px; }
.fsep { margin-top: 4px; border-top: 1px solid #d2d0ce; }
.flabel { margin: 11px 7px 0 6px; height: 14px; line-height: 14px; display: flex; justify-content: space-between; font-size: 8.8px; }
.flabel.second { margin-top: 20px; }
.dots { color: #8a8886; font-weight: 700; }
.fwell { margin: 6px 0 0 7px; width: 137px; height: 33px; border: 1px solid #e1dfdd; display: flex; align-items: center; justify-content: center; flex: none; }
.fwell.tall { height: 34px; }
.build { height: 12px; line-height: 12px; font-weight: 600; font-size: 8.5px; }
.buildrow { display: flex; align-items: center; margin-top: 3px; height: 24px; flex: none; }
.bsel { width: 22px; height: 24px; background: #dad9d7; padding: 2px 1px; display: flex; }
.bsel svg { width: 20px; height: 20px; }
.bfmt { width: 22px; height: 22px; margin-left: 26px; }
.vsep { height: 1px; background: #c8c6c4; margin: 8px 0 0 -6px; position: relative; flex: none; }
.vsep i { position: absolute; left: 14px; top: -3px; width: 6px; height: 6px; background: #f3f2f1; border-left: 1px solid #c8c6c4; border-top: 1px solid #c8c6c4; transform: rotate(45deg); }
.vgrid { display: grid; grid-template-columns: repeat(6, 21px); grid-auto-rows: 21px; margin: 6.5px 0 0 -2px; justify-items: center; align-items: center; flex: none; }
.vgrid svg { width: 15px; height: 15px; }
.vt { font-weight: 700; color: #4a8fc8; font-size: 11px; line-height: 15px; }
.vt.py { font-size: 12px; }
.vt.more { color: #605e5c; font-weight: 400; }
.vline { margin: 5px 0 0 -6px; border-top: 1px solid #e1dfdd; }
.vlabel { margin: 5px 0 0 3px; height: 14px; line-height: 14px; font-size: 8.5px; }
.vlabel.strong { margin-top: 8px; height: 15px; font-weight: 600; font-size: 9px; }
.vwell { margin: 4px 0 0 -2px; width: 126px; height: 19px; background: #fff; padding-left: 7px; display: flex; align-items: center; white-space: nowrap; font-size: 8.8px; flex: none; }
.vwell.short { height: 17px; margin-top: 6px; padding-left: 5px; }
.vopt { display: flex; justify-content: space-between; align-items: center; height: 20px; margin: 0 5px 0 3px; font-size: 8.8px; white-space: nowrap; }
.tog { width: 24px; height: 12px; border: 1px solid #8a8886; border-radius: 6px; font-size: 6px; line-height: 10px; position: relative; padding-left: 10px; background: #fff; flex: none; }
.tog i { position: absolute; left: 3px; top: 2px; width: 6px; height: 6px; border-radius: 50%; background: #605e5c; }
.tog.ison { background: #4f4e4d; border-color: #4f4e4d; color: #eee; padding-left: 3px; }
.tog.ison i { left: auto; right: 3px; background: #fff; }
.dsearch { margin-top: 6px; width: 127px; height: 19px; border: 1px solid #b5b3b1; background: #fff; display: flex; align-items: center; padding-left: 5px; font-size: 10px; flex: none; }
.dsearch .mag-ico { margin-right: 5px; }
.tree { margin-top: 9px; }
.node { height: 18px; display: flex; align-items: center; font-size: 8.6px; white-space: nowrap; }
.ch { width: 8px; height: 12px; margin-left: 2px; flex: none; }
.ti { width: 12px; height: 12px; margin: 0 3px 0 2px; flex: none; }

/* status */
.status { height: 19px; flex: none; background: #f3f2f1; border-top: 1px solid #e1dfdd; display: flex; align-items: center; justify-content: space-between; padding: 0 17px 0 4px; font-size: 8.5px; color: #605e5c; }
.zoombar { display: flex; align-items: center; }
.zb { width: 5px; text-align: center; color: #7a7876; font-size: 9px; }
.slider { width: 75px; height: 1px; background: #8a8886; position: relative; margin: 0 3px; }
.slider i { position: absolute; left: 44px; top: -5px; width: 3px; height: 10px; background: #605e5c; }
.pct { margin: 0 11px 0 12px; color: #8a8886; font-size: 8.5px; }
.fit { width: 14px; height: 12px; }

/* taskbar */
.taskbar { height: 36px; flex: none; background: #1c1c1c; display: flex; align-items: center; justify-content: space-between; }
.apps { display: flex; padding-left: 7px; }
.app-ico { width: 33px; height: 34px; display: flex; align-items: center; justify-content: center; position: relative; }
.app-ico svg { width: 20px; height: 20px; }
.app-ico.pin::after { content: ""; position: absolute; bottom: 1px; left: 14px; width: 5px; height: 2px; background: #9a9a9a; border-radius: 1px; }
.app-ico.active { background: #2e2e2e; border-radius: 3px; }
.app-ico.active::after { left: 11px; width: 11px; }
.tray { display: flex; align-items: center; padding-right: 14px; color: #e0e0e0; }
.tico { width: 13px; height: 13px; margin-right: 8px; }
.tico.up { width: 12px; height: 12px; }
.clock { display: flex; flex-direction: column; align-items: flex-end; font-size: 8.8px; font-weight: 600; line-height: 13px; margin: 0 9px 0 4px; white-space: nowrap; }
.badge { width: 13px; height: 13px; border-radius: 50%; background: #b5b3b1; color: #333; font-size: 8px; line-height: 13px; text-align: center; }
```
